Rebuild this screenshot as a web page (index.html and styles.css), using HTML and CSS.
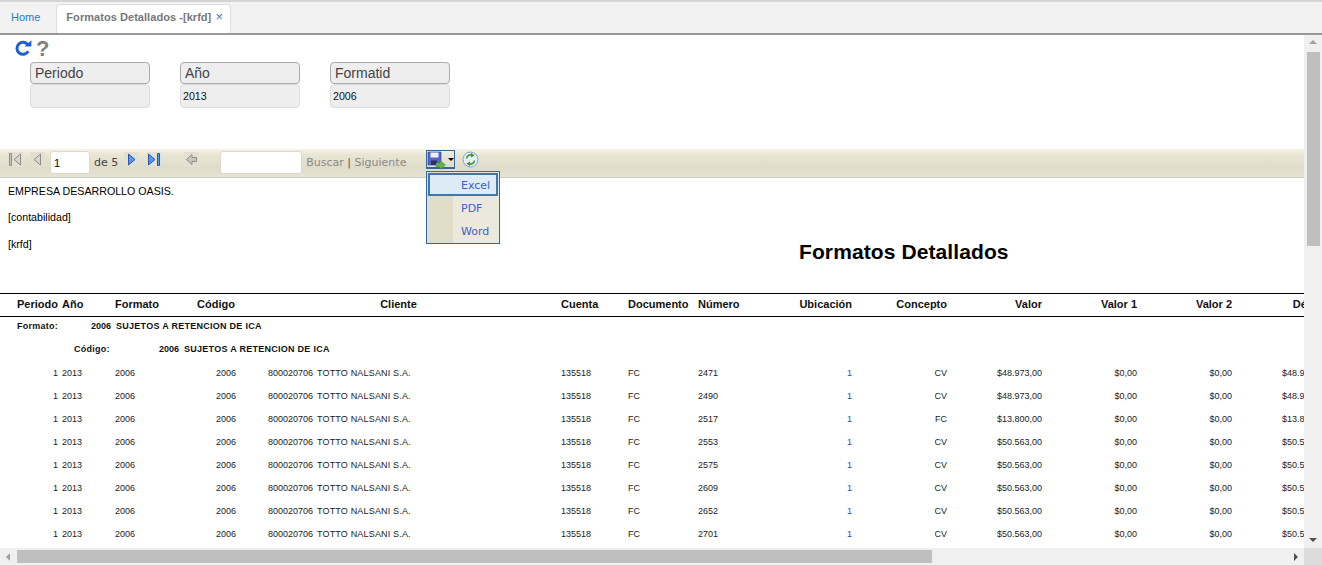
FILE: index.html
```html
<!DOCTYPE html>
<html>
<head>
  <title>Formatos Detallados</title>
  <link rel="stylesheet" href="styles.css">
</head>
<body>
  <div class="tabs">
    <a class="tab">Home</a>
    <a class="tab tab-active">Formatos Detallados -[krfd] <span class="tab-close">×</span></a>
  </div>

  <div class="main">
    <div class="content">
      <div class="actions">
        <svg class="icon-reload" width="17" height="17" viewBox="0 0 17 17">
          <path d="M13.2 11.2A6 6 0 1 1 13 5" fill="none" stroke="#1d5fcf" stroke-width="3"/>
          <path d="M9.6 6.6H16.4V0.2Z" fill="#1d5fcf"/>
        </svg>
        <span class="icon-help">?</span>
      </div>

      <div class="params">
        <div class="param">
          <div class="param-label">Periodo</div>
          <div class="param-value"></div>
        </div>
        <div class="param">
          <div class="param-label">Año</div>
          <div class="param-value">2013</div>
        </div>
        <div class="param">
          <div class="param-label">Formatid</div>
          <div class="param-value">2006</div>
        </div>
      </div>

      <div class="toolbar">
        <span class="tool tool-first">
          <svg width="15" height="15" viewBox="0 0 15 15"><path d="M1.5 1.5h2v12h-2z" fill="#c9c7bd" stroke="#8f8f8a"/><path d="M12.5 2v11L6 7.5Z" fill="#d9d7cc" stroke="#8f8f8a"/></svg>
        </span>
        <span class="tool tool-prev">
          <svg width="15" height="15" viewBox="0 0 15 15"><path d="M10.5 2v11L4 7.5Z" fill="#d9d7cc" stroke="#8f8f8a"/></svg>
        </span>
        <input class="page-input" type="text" value="1">
        <span class="page-total">de 5</span>
        <span class="tool tool-next">
          <svg width="15" height="15" viewBox="0 0 15 15"><path d="M4.5 2v11L11 7.5Z" fill="#5b94e6" stroke="#2459b8"/></svg>
        </span>
        <span class="tool tool-last">
          <svg width="15" height="15" viewBox="0 0 15 15"><path d="M2.5 2v11L9 7.5Z" fill="#5b94e6" stroke="#2459b8"/><path d="M11.5 1.5h2v12h-2z" fill="#5b94e6" stroke="#2459b8"/></svg>
        </span>
        <span class="tool tool-back">
          <svg width="15" height="15" viewBox="0 0 15 15"><path d="M2.500 7.500 8 2.500V5.500H12.500V9.500H8V12.500Z" fill="#c9c7bd" stroke="#8f8f8a"/></svg>
        </span>
        <input class="find-input" type="text">
        <span class="find-links">Buscar <span class="find-sep">|</span> Siguiente</span>
        <span class="export-btn">
          <svg width="19" height="18" viewBox="0 0 19 18">
            <path d="M1 1h13v13H1z" fill="#5566c4" stroke="#2f3a86" stroke-width="0.6"/>
            <path d="M3.500 1.500h8v5h-8z" fill="#eeeef6"/>
            <path d="M4 9.500h6v4.500H4z" fill="#2a3068"/>
            <path d="M9 12h4V9.500l5.500 4.500-5.500 4.500V16H9z" fill="#63b04f" stroke="#3f8a35" stroke-width="0.5"/>
          </svg>
          <span class="export-caret"></span>
        </span>
        <span class="tool-refresh">
          <svg width="17" height="17" viewBox="0 0 17 17">
            <circle cx="8.500" cy="8.500" r="7.500" fill="#e6eef4" stroke="#7fa6d8"/>
            <path d="M4.500 7.500A4 4 0 0 1 10 4.200" fill="none" stroke="#3c9a32" stroke-width="1.600"/>
            <path d="M9 1.800 12.600 4.400 9 6.600Z" fill="#3c9a32"/>
            <path d="M12.500 9.500A4 4 0 0 1 7 12.800" fill="none" stroke="#3c9a32" stroke-width="1.600"/>
            <path d="M8 10.400 4.400 12.600 8 15.200Z" fill="#3c9a32"/>
          </svg>
        </span>

        <div class="export-menu">
          <div class="export-item export-item-on">Excel</div>
          <div class="export-item">PDF</div>
          <div class="export-item">Word</div>
        </div>
      </div>

      <div class="report">
        <div class="report-head">
          <div class="report-info">
            <p>EMPRESA DESARROLLO OASIS.</p>
            <p>[contabilidad]</p>
            <p>[krfd]</p>
          </div>
          <h1 class="report-title">Formatos Detallados</h1>
        </div>

        <div class="row row-header">
          <span class="c-periodo">Periodo</span><span>Año</span><span>Formato</span><span class="c-codigo">Código</span>
          <span class="c-cliente">Cliente</span>
          <span>Cuenta</span><span>Documento</span><span>Número</span>
          <span class="r">Ubicación</span><span class="r">Concepto</span><span class="r">Valor</span><span class="r">Valor 1</span><span class="r">Valor 2</span><span class="r">Débito</span>
        </div>

        <div class="group group-formato"><span class="group-label">Formato:</span><span class="group-num">2006</span><span class="group-name">SUJETOS A RETENCION DE ICA</span></div>
        <div class="group group-codigo"><span class="group-label">Código:</span><span class="group-num">2006</span><span class="group-name">SUJETOS A RETENCION DE ICA</span></div>

        <div class="row row-data"><span class="r">1</span><span>2013</span><span>2006</span><span class="r">2006</span><span class="r">800020706</span><span class="name">TOTTO NALSANI S.A.</span><span>135518</span><span>FC</span><span>2471</span><span class="r link">1</span><span class="r">CV</span><span class="r">$48.973,00</span><span class="r">$0,00</span><span class="r">$0,00</span><span class="r">$48.973,00</span></div>
        <div class="row row-data"><span class="r">1</span><span>2013</span><span>2006</span><span class="r">2006</span><span class="r">800020706</span><span class="name">TOTTO NALSANI S.A.</span><span>135518</span><span>FC</span><span>2490</span><span class="r link">1</span><span class="r">CV</span><span class="r">$48.973,00</span><span class="r">$0,00</span><span class="r">$0,00</span><span class="r">$48.973,00</span></div>
        <div class="row row-data"><span class="r">1</span><span>2013</span><span>2006</span><span class="r">2006</span><span class="r">800020706</span><span class="name">TOTTO NALSANI S.A.</span><span>135518</span><span>FC</span><span>2517</span><span class="r link">1</span><span class="r">FC</span><span class="r">$13.800,00</span><span class="r">$0,00</span><span class="r">$0,00</span><span class="r">$13.800,00</span></div>
        <div class="row row-data"><span class="r">1</span><span>2013</span><span>2006</span><span class="r">2006</span><span class="r">800020706</span><span class="name">TOTTO NALSANI S.A.</span><span>135518</span><span>FC</span><span>2553</span><span class="r link">1</span><span class="r">CV</span><span class="r">$50.563,00</span><span class="r">$0,00</span><span class="r">$0,00</span><span class="r">$50.563,00</span></div>
        <div class="row row-data"><span class="r">1</span><span>2013</span><span>2006</span><span class="r">2006</span><span class="r">800020706</span><span class="name">TOTTO NALSANI S.A.</span><span>135518</span><span>FC</span><span>2575</span><span class="r link">1</span><span class="r">CV</span><span class="r">$50.563,00</span><span class="r">$0,00</span><span class="r">$0,00</span><span class="r">$50.563,00</span></div>
        <div class="row row-data"><span class="r">1</span><span>2013</span><span>2006</span><span class="r">2006</span><span class="r">800020706</span><span class="name">TOTTO NALSANI S.A.</span><span>135518</span><span>FC</span><span>2609</span><span class="r link">1</span><span class="r">CV</span><span class="r">$50.563,00</span><span class="r">$0,00</span><span class="r">$0,00</span><span class="r">$50.563,00</span></div>
        <div class="row row-data"><span class="r">1</span><span>2013</span><span>2006</span><span class="r">2006</span><span class="r">800020706</span><span class="name">TOTTO NALSANI S.A.</span><span>135518</span><span>FC</span><span>2652</span><span class="r link">1</span><span class="r">CV</span><span class="r">$50.563,00</span><span class="r">$0,00</span><span class="r">$0,00</span><span class="r">$50.563,00</span></div>
        <div class="row row-data"><span class="r">1</span><span>2013</span><span>2006</span><span class="r">2006</span><span class="r">800020706</span><span class="name">TOTTO NALSANI S.A.</span><span>135518</span><span>FC</span><span>2701</span><span class="r link">1</span><span class="r">CV</span><span class="r">$50.563,00</span><span class="r">$0,00</span><span class="r">$0,00</span><span class="r">$50.563,00</span></div>
      </div>
    </div>

    <div class="vscroll">
      <span class="arrow arrow-up"></span>
      <div class="vscroll-thumb"></div>
      <span class="arrow arrow-down"></span>
    </div>
  </div>

  <div class="hscroll">
    <span class="arrow arrow-left"></span>
    <div class="hscroll-thumb"></div>
    <span class="arrow arrow-right"></span>
    <div class="scroll-corner"></div>
  </div>
</body>
</html>
```

FILE: styles.css
```css
html, body {
  margin: 0;
  height: 565px;
  overflow: hidden;
  background-color: #fff;
}

body {
  display: flex;
  flex-direction: column;
  font-family: "Liberation Sans", Arial, sans-serif;
}

/* Tabs */
.tabs {
  display: flex;
  align-items: flex-end;
  height: 31px;
  border-top: 2px solid #d4d4d4;
  border-bottom: 2px solid #999;
  background-color: #f2f2f2;
  box-sizing: content-box;
}

.tab {
  height: 26px;
  line-height: 20px;
  padding: 0 11px;
  margin-right: 4px;
  font-size: 11px;
  color: #1f7dc4;
}

.tab-active {
  box-sizing: border-box;
  width: 175px;
  height: 29px;
  line-height: 23px;
  padding: 0 0 0 9px;
  margin-left: 1px;
  background-color: #fff;
  border: 1px solid #ddd;
  border-bottom: none;
  border-radius: 4px 4px 0 0;
  color: #777;
  font-weight: bold;
  letter-spacing: 0.05px;
}

.tab-close {
  margin-left: 1px;
  color: #4a78b8;
  font-weight: normal;
  font-size: 13px;
}

/* Main area */
.main {
  display: flex;
  height: 513px;
}

.content {
  width: 1304px;
  overflow: hidden;
}

.actions {
  display: flex;
  align-items: center;
  height: 27px;
  padding-left: 15px;
  gap: 4px;
}

.icon-reload {
  display: block;
}

.icon-help {
  font-size: 22px;
  line-height: 22px;
  font-weight: bold;
  color: #808080;
}

/* Parameters */
.params {
  display: flex;
  gap: 30px;
  padding-left: 30px;
  height: 87px;
}

.param {
  width: 120px;
}

.param-label {
  box-sizing: border-box;
  height: 22px;
  line-height: 20px;
  padding-left: 4px;
  background-color: #eee;
  border: 1px solid #aaa;
  border-radius: 4px;
  font-size: 14px;
  color: #444;
}

.param-value {
  box-sizing: border-box;
  height: 24px;
  line-height: 23px;
  padding-left: 2px;
  background-color: #eee;
  border: 1px solid #ddd;
  border-radius: 4px;
  font-size: 10.670px;
  color: #111;
}

/* Report toolbar */
.toolbar {
  position: relative;
  display: flex;
  align-items: center;
  box-sizing: border-box;
  height: 29px;
  padding-left: 8px;
  background: linear-gradient(#f6f3e4 0, #e9e6d6 20%, #dfdccb 65%, #e6e3d4 100%);
  border-bottom: 1px solid #cfcdbf;
  font-family: "DejaVu Sans", Verdana, sans-serif;
  font-size: 11px;
}

.tool {
  display: flex;
  width: 15px;
  height: 15px;
  margin-top: -7px;
  background-color: #e3e0d1;
}

.tool-prev { margin-left: 7px; }
.tool-next { margin-left: 6px; }
.tool-last { margin-left: 7px; }
.tool-back { margin-left: 23px; }

.page-input,
.find-input {
  box-sizing: border-box;
  height: 23px;
  margin-top: -1px;
  padding: 0 0 0 3px;
  background-color: #fff;
  border: 1px solid #dcdad0;
  border-radius: 3px;
  font-family: "Liberation Sans", Arial, sans-serif;
  font-size: 11px;
  color: #000;
}

.page-input {
  width: 40px;
  margin-left: 5px;
}

.find-input {
  width: 82px;
  margin-left: 21px;
}

.page-total {
  margin: -2px 0 0 4px;
  color: #444;
}

.find-links {
  margin: -2px 0 0 4px;
  color: #8a8a84;
}

.find-sep {
  color: #555;
}

.export-btn {
  position: relative;
  z-index: 6;
  display: flex;
  align-items: flex-start;
  box-sizing: border-box;
  width: 29px;
  height: 19px;
  margin: -7px 0 0 20px;
  border: 1px solid #336a9e;
  border-bottom-width: 2px;
}

.export-btn svg {
  display: block;
  flex-shrink: 0;
  overflow: visible;
}

.export-caret {
  margin: 7px 0 0 2px;
  border-left: 3px solid transparent;
  border-right: 3px solid transparent;
  border-top: 3px solid #000;
}

.tool-refresh {
  display: flex;
  margin: -7px 0 0 7px;
}

.export-menu {
  position: absolute;
  left: 426px;
  top: 22px;
  z-index: 5;
  box-sizing: border-box;
  width: 74px;
  height: 73px;
  padding: 1px;
  background: linear-gradient(90deg, #e1ddc9 0, #e1ddc9 26px, #ece9dc 26px);
  border: 1px solid #336a9e;
  font-size: 11px;
  color: #3f5fc8;
}

.export-item {
  box-sizing: border-box;
  height: 23px;
  line-height: 26px;
  padding-left: 33px;
}

.export-item-on {
  background-color: #dcebf6;
  border: 2px solid #3f77ae;
  padding-left: 31px;
  line-height: 22px;
}

/* Report */
.report-head {
  display: flex;
  height: 115px;
}

.report-info {
  width: 799px;
  padding: 7px 0 0 8px;
  box-sizing: border-box;
  font-size: 10.670px;
  color: #000;
}

.report-info p {
  margin: 0 0 14.400px;
  line-height: 12px;
}

.report-title {
  margin: 62px 0 0;
  font-size: 21px;
  line-height: 23px;
  font-weight: bold;
  letter-spacing: 0.1px;
  color: #000;
  white-space: nowrap;
}

.row {
  display: grid;
  grid-template-columns: 60px 53px 82px 43px 77px 244px 67px 70px 64px 94px 95px 95px 95px 95px 95px;
  width: 1329px;
  font-size: 9px;
  color: #222;
}

.row > span {
  padding: 0 2px;
  white-space: nowrap;
  overflow: hidden;
}

.row .r {
  text-align: right;
}

.row .name {
  letter-spacing: 0.17px;
}

.row-header {
  box-sizing: border-box;
  height: 24px;
  line-height: 21px;
  border-top: 1px solid #000;
  border-bottom: 1px solid #000;
  font-size: 11px;
  font-weight: bold;
  color: #111;
}

.row .c-periodo {
  padding-left: 17px;
  padding-right: 0;
}

.row .c-cliente {
  grid-column: 5 / span 2;
  text-align: center;
}

.row-data {
  height: 23px;
  line-height: 21px;
}

.row .link {
  color: #1f4fa8;
}

.group {
  display: flex;
  height: 23px;
  line-height: 18px;
  font-size: 9px;
  font-weight: bold;
  color: #111;
}

.group-formato .group-label {
  margin-left: 17px;
  width: 64px;
  letter-spacing: 0.25px;
}

.group-codigo .group-label {
  margin-left: 74px;
  width: 75px;
  letter-spacing: 0.25px;
}

.group-num {
  width: 30px;
  text-align: right;
}

.group-name {
  margin-left: 5px;
  letter-spacing: 0.27px;
}

/* Fake scrollbars */
.vscroll {
  position: relative;
  display: flex;
  flex-direction: column;
  align-items: center;
  width: 18px;
  background-color: #f0f0f0;
}

.vscroll-thumb {
  width: 13px;
  height: 194px;
  margin-top: 17px;
  background-color: #bfbfbf;
}

.hscroll {
  position: relative;
  display: flex;
  align-items: center;
  height: 17px;
  background-color: #f0f0f0;
}

.hscroll-thumb {
  width: 915px;
  height: 13px;
  margin-left: 17px;
  background-color: #bfbfbf;
}

.scroll-corner {
  position: absolute;
  right: 0;
  top: 0;
  width: 18px;
  height: 17px;
  background-color: #dcdcdc;
}

.arrow {
  position: absolute;
  width: 0;
  height: 0;
  border-style: solid;
  border-color: transparent;
}

.arrow-up {
  top: 5px;
  border-width: 0 4px 4px;
  border-bottom-color: #a0a0a0;
}

.arrow-down {
  bottom: 6px;
  border-width: 4px 4px 0;
  border-top-color: #505050;
}

.arrow-left {
  left: 6px;
  border-width: 4px 4px 4px 0;
  border-right-color: #a0a0a0;
}

.arrow-right {
  right: 24px;
  border-width: 4px 0 4px 4px;
  border-left-color: #505050;
}
```
